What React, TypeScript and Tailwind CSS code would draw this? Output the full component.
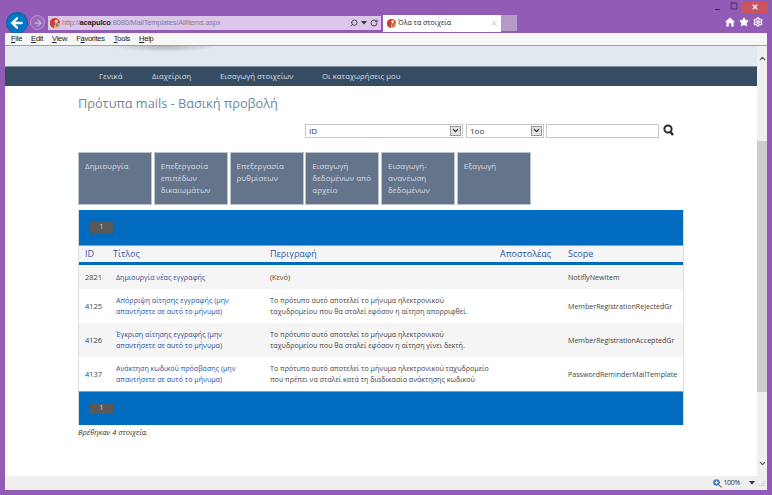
import { ChevronDown, ChevronUp, Star, Settings, X, Minus, Square, ArrowLeft, ArrowRight, RotateCw, Search } from "lucide-react";

const buttons = [
  ["Δημιουργία"],
  ["Επεξεργασία", "επιπέδων", "δικαιωμάτων"],
  ["Επεξεργασία", "ρυθμίσεων"],
  ["Εισαγωγή", "δεδομένων από", "αρχείο"],
  ["Εισαγωγή-", "ανανέωση", "δεδομένων"],
  ["Εξαγωγή"],
];

const rows = [
  {
    id: "2821",
    title: ["Δημιουργία νέας εγγραφής"],
    desc: ["(Κενό)"],
    scope: "NotiflyNewItem",
    height: "h-[24px] bg-[#f5f5f5]",
  },
  {
    id: "4125",
    title: ["Απόρριψη αίτησης εγγραφής (μην", "απαντήσετε σε αυτό το μήνυμα)"],
    desc: [
      "Το πρότυπο αυτό αποτελεί το μήνυμα ηλεκτρονικού",
      "ταχυδρομείου που θα σταλεί εφόσον η αίτηση απορριφθεί.",
    ],
    scope: "MemberRegistrationRejectedGr",
    height: "h-[34px] bg-white",
  },
  {
    id: "4126",
    title: ["Έγκριση αίτησης εγγραφής (μην", "απαντήσετε σε αυτό το μήνυμα)"],
    desc: [
      "Το πρότυπο αυτό αποτελεί το μήνυμα ηλεκτρονικού",
      "ταχυδρομείου που θα σταλεί εφόσον η αίτηση γίνει δεκτή.",
    ],
    scope: "MemberRegistrationAcceptedGr",
    height: "h-[34px] bg-[#f5f5f5]",
  },
  {
    id: "4137",
    title: ["Ανάκτηση κωδικού πρόσβασης (μην", "απαντήσετε σε αυτό το μήνυμα)"],
    desc: [
      "Το πρότυπο αυτό αποτελεί το μήνυμα ηλεκτρονικού ταχυδρομείο",
      "που πρέπει να σταλεί κατά τη διαδικασία ανάκτησης κωδικού",
    ],
    scope: "PasswordReminderMailTemplate",
    height: "h-[34px] bg-white",
  },
];

function Favicon({ size }: { size: number }) {
  return (
    <svg width={size} height={size} viewBox="0 0 16 16" className="shrink-0">
      <circle cx="8" cy="8" r="8" fill="#d8352a" />
      <path d="M8 8 L16 8 A8 8 0 0 1 6 15.8 Z" fill="#f2b632" />
      <path d="M8 8 L6 15.8 A8 8 0 0 1 1 4 Z" fill="#c2473a" />
      <circle cx="10" cy="5" r="2.6" fill="#f6d9c8" />
      <circle cx="11" cy="11" r="2.2" fill="#4a7fd0" />
    </svg>
  );
}

function Caret() {
  return (
    <svg width="6" height="4" viewBox="0 0 6 4" className="shrink-0">
      <path d="M0 0 H6 L3 3.5 Z" fill="#333" />
    </svg>
  );
}

function Select({ value, className }: { value: string; className: string }) {
  return (
    <div className={`flex h-[14px] items-center justify-between border border-[#c8c8c8] bg-white pl-[3px] pr-[1px] text-[8px] text-[#333] ${className}`}>
      <span>{value}</span>
      <span className="flex h-[10px] w-[11px] items-center justify-center border border-[#9a9a9a] bg-[#e4e4e4]">
        <ChevronDown size={9} strokeWidth={3} className="text-[#222]" />
      </span>
    </div>
  );
}

function Pager({ height }: { height: string }) {
  return (
    <div className={`flex items-center bg-[#006bbf] pl-[11px] ${height}`}>
      <span className="flex h-[11px] w-[23px] items-center justify-center bg-[#595959] text-[7px] text-[#d8d8d8]">1</span>
    </div>
  );
}

export default function App() {
  return (
    <div className="flex h-[495px] w-[772px] flex-col overflow-hidden bg-[#925bb5] font-['Open_Sans',sans-serif]">
      {/* browser chrome */}
      <div className="flex h-[33px] shrink-0">
        <div className="flex w-[116px] shrink-0 items-end pl-[6px]">
          <div className="-mb-[1px] flex h-[22px] w-[22px] items-center justify-center rounded-full border border-[#0a5f9c] bg-[#0078c4]">
            <ArrowLeft size={16} strokeWidth={3.5} className="text-white" />
          </div>
          <div className="mb-[3px] ml-[2px] flex h-[15px] w-[15px] items-center justify-center rounded-full border border-[#b79ad0] bg-[#9a68bb]">
            <ArrowRight size={10} strokeWidth={3} className="text-[#c9b2da]" />
          </div>
        </div>
        <div className="flex flex-1 flex-col">
          <div className="h-[16px]" />
          <div className="flex h-[14px]">
            <div className="-ml-[68px] flex w-[333px] items-center bg-[#dcc7e9] pl-[2px] pr-[3px] text-[7.5px] tracking-[-0.17px] text-[#8a7ca0]">
              <Favicon size={10} />
              <span className="ml-[2px] flex-1 font-['Liberation_Sans',sans-serif]">
                http://<b className="text-[#222]">acapulco</b>:8080/MailTemplates/AllItems.aspx
              </span>
              <Search size={8} strokeWidth={2.5} className="-scale-x-100 text-[#333]" />
              <span className="mx-[3px]"><Caret /></span>
              <RotateCw size={8} strokeWidth={2.5} className="text-[#333]" />
            </div>
            <div className="ml-[2px] flex h-[17px] w-[118px] shrink-0 -translate-y-[1px] items-center bg-white pl-[4px] pr-[3px] text-[7px] text-[#222]">
              <Favicon size={9} />
              <span className="ml-[2px] flex-1">Όλα τα στοιχεία</span>
              <X size={7} strokeWidth={2} className="text-[#999]" />
            </div>
            <div className="h-[16px] w-[16px] shrink-0 -translate-y-[1px] bg-[#b49cc6]" />
          </div>
        </div>
        <div className="flex w-[60px] shrink-0 flex-col items-end">
          <div className="mr-[4px] mt-[1px] flex h-[12px] items-center">
            <Minus size={7} strokeWidth={3} className="mr-[9px] mt-[5px] text-[#2a1a3a]" />
            <Square size={8} strokeWidth={2} className="mr-[3px] -mt-[3px] text-[#2a1a3a]" />
            <div className="flex h-[12px] w-[27px] items-center justify-center bg-[#c8555f]">
              <X size={8} strokeWidth={3.5} className="text-white" />
            </div>
          </div>
          <div className="mr-[9px] mt-[4px] flex items-center gap-[4px] text-white">
            <svg width="10" height="10" viewBox="0 0 10 10">
              <path d="M5 0.5 L10 5 H8.6 V9.5 H6.2 V6.2 H3.8 V9.5 H1.4 V5 H0 Z" fill="white" />
            </svg>
            <Star size={10} fill="white" />
            <Settings size={10} strokeWidth={3} />
          </div>
        </div>
      </div>

      <div className="mx-[5px] flex min-h-0 flex-1 flex-col">
        {/* menu bar */}
        <div className="flex h-[13px] shrink-0 items-center gap-[9px] border-b border-[#a0a0a0] bg-[#f7f7f7] pl-[6px] font-['Liberation_Sans',sans-serif] text-[7.5px] tracking-[-0.25px] text-[#222]">
          <span><u>F</u>ile</span>
          <span><u>E</u>dit</span>
          <span><u>V</u>iew</span>
          <span>F<u>a</u>vorites</span>
          <span><u>T</u>ools</span>
          <span><u>H</u>elp</span>
        </div>

        <div className="flex min-h-0 flex-1">
          {/* page */}
          <div className="flex min-w-0 flex-1 flex-col bg-white">
            <div className="h-[20px] shrink-0 bg-[#e1e8ef]">
              <div className="ml-[105px] h-[6px] w-[110px] bg-[radial-gradient(ellipse_at_center_top,#aeb4b6,transparent_70%)]" />
            </div>
            <nav className="flex h-[20px] shrink-0 items-center border-t border-[#7f8fa0] bg-[#364c63] pl-[94px] pt-[1px] text-[7.75px] text-[#d5dde5]">
              <span className="w-[53px]">Γενικά</span>
              <span className="w-[68px]">Διαχείριση</span>
              <span className="w-[102px]">Εισαγωγή στοιχείων</span>
              <span>Οι καταχωρήσεις μου</span>
            </nav>

            <div className="flex flex-col pl-[73px] pr-[73px]">
              <h1 className="mt-[7px] h-[20px] text-[12.75px] leading-[20px] text-[#6f8796]">Πρότυπα mails - Βασική προβολή</h1>

              <div className="mt-[10px] flex h-[15px] items-center pl-[227px]">
                <Select value="ID" className="w-[158px]" />
                <Select value="1οο" className="ml-[3px] w-[78px]" />
                <div className="ml-[2px] h-[14px] w-[113px] border border-[#c8c8c8] bg-white" />
                <svg width="11" height="12" viewBox="0 0 11 12" className="-mt-[2px] ml-[4px]">
                  <circle cx="5" cy="5" r="3.6" fill="none" stroke="#2b2b2b" strokeWidth="2" />
                  <path d="M7.5 8 L10 11" stroke="#2b2b2b" strokeWidth="2.4" />
                </svg>
              </div>

              <div className="mt-[14px] flex gap-[1.75px]">
                {buttons.map((lines, i) => (
                  <div key={i} className="h-[53px] w-[74px] shrink-0 border border-[#b9c6d2] bg-[#64748a] pl-[6px] pt-[7px] text-[8px] leading-[12px] text-[#d5dce4]">
                    {lines.map((l) => (
                      <div key={l}>{l}</div>
                    ))}
                  </div>
                ))}
              </div>

              {/* table */}
              <div className="mt-[5px] flex w-[606px] flex-col border-x border-[#dcdcdc]">
                <Pager height="h-[35px]" />
                <div className="flex h-[17px] items-center border-t border-[#6aa6d8] bg-[#f5f5f5] text-[9px] text-[#2f55a4]">
                  <span className="w-[34px] pl-[6px]">ID</span>
                  <span className="w-[157px]">Τίτλος</span>
                  <span className="w-[230px]">Περιγραφή</span>
                  <span className="w-[68px]">Αποστολέας</span>
                  <span>Scope</span>
                </div>
                <div className="h-[3px] bg-[#006bbf]" />
                {rows.map((r) => (
                  <div key={r.id} className={`flex items-center text-[7.1px] leading-[11px] text-[#444] ${r.height}`}>
                    <span className="w-[37px] pl-[6px] text-[7.5px]">{r.id}</span>
                    <div className="w-[154px] text-[#2a4f9e]">
                      {r.title.map((t) => (
                        <div key={t}>{t}</div>
                      ))}
                    </div>
                    <div className="w-[298px]">
                      {r.desc.map((t) => (
                        <div key={t}>{t}</div>
                      ))}
                    </div>
                    <span className="whitespace-nowrap">{r.scope}</span>
                  </div>
                ))}
                <div className="border-t border-[#6aa6d8]">
                  <Pager height="h-[33px]" />
                </div>
              </div>
              <p className="mt-[2px] text-[7.5px] italic text-[#333]">Βρέθηκαν 4 στοιχεία.</p>
            </div>
          </div>

          {/* scrollbar */}
          <div className="flex w-[10px] shrink-0 flex-col items-center bg-[#efefef]">
            <ChevronUp size={9} strokeWidth={3} className="mt-[8px] text-[#555]" />
            <div className="mt-[78px] h-[251px] w-full bg-[#cdcdcd]" />
            <div className="flex-1" />
            <ChevronDown size={9} strokeWidth={3} className="mb-[8px] text-[#555]" />
          </div>
        </div>

        {/* status bar */}
        <div className="flex h-[14px] shrink-0 items-center justify-end bg-[#efefef] pr-[2px] text-[7px] tracking-[-0.3px] text-[#333]">
          <svg width="9" height="9" viewBox="0 0 9 9" className="shrink-0">
            <circle cx="3.5" cy="3.5" r="3.3" fill="#3f7fc4" />
            <path d="M1.8 3.5 H5.2 M3.5 1.8 V5.2" stroke="white" strokeWidth="1" />
            <path d="M6 6 L8.5 8.5" stroke="#c7772c" strokeWidth="1.4" />
          </svg>
          <span className="ml-[1px]">100%</span>
          <span className="ml-[9px]"><Caret /></span>
          <svg width="6" height="6" viewBox="0 0 6 6" className="ml-[4px] shrink-0">
            <path d="M5 1 V2 M3 3 V4 M5 3 V4 M1 5 V6 M3 5 V6 M5 5 V6" stroke="#b5b5b5" strokeWidth="1" />
          </svg>
        </div>
      </div>
      <div className="h-[5px] shrink-0" />
    </div>
  );
}
